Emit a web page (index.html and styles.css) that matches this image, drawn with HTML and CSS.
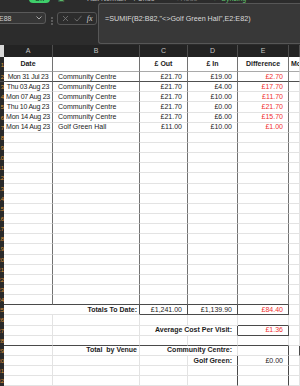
FILE: index.html
```html
<!DOCTYPE html>
<html lang="en">
<head>
    <meta charset="UTF-8">
    <title>Hall costs</title>
    <link rel="stylesheet" href="styles.css">
</head>
<body>
<div class="ribbon">
    <span class="toggle">On</span>
    <span class="rib-save">&#9635;</span>
    <span class="rib-text">Hall Norman</span>
    <span class="rib-text rib-undo">/ Undo</span>
    <span class="rib-text rib-redo">&lt; Redo</span>
    <span class="rib-sync">&#10003; Syncing</span>
</div>

<div class="formula-bar">
    <div class="name-box">
        <span>E88</span>
        <svg width="6" height="4" viewBox="0 0 6 4"><path d="M0.5 0.5 L3 3 L5.5 0.5" fill="none" stroke="#b8b8b8" stroke-width="0.9"/></svg>
    </div>
    <svg class="grip" width="2" height="8" viewBox="0 0 2 8"><circle cx="1" cy="1" r="0.8" fill="#9a9a9a"/><circle cx="1" cy="4" r="0.8" fill="#9a9a9a"/><circle cx="1" cy="7" r="0.8" fill="#9a9a9a"/></svg>
    <div class="fx-box">
        <svg width="7" height="7" viewBox="0 0 7 7"><path d="M1 1 L6 6 M6 1 L1 6" stroke="#7a7a7a" stroke-width="0.8"/></svg>
        <svg width="8" height="7" viewBox="0 0 8 7"><path d="M0.5 3.8 L3 6 L7.5 0.8" fill="none" stroke="#7a7a7a" stroke-width="0.8"/></svg>
        <span class="fx">fx</span>
    </div>
    <div class="formula">=SUMIF(B2:B82,"&lt;&gt;Golf Green Hall",E2:E82)</div>
</div>

<table class="sheet">
    <colgroup>
        <col class="w-rh"><col class="w-a"><col class="w-b"><col class="w-c"><col class="w-d"><col class="w-e"><col class="w-f">
    </colgroup>
    <thead>
    <tr class="col-head">
        <th class="corner"></th><th>A</th><th>B</th><th>C</th><th>D</th><th>E</th><th></th>
    </tr>
    </thead>
    <tbody>
    <tr class="grid title-row">
        <th class="rh">1</th><td class="mid">Date</td><td></td><td class="mid">£ Out</td><td class="mid">£ In</td><td class="mid">Difference</td><td class="bold">Mo</td>
    </tr>
    <tr class="grid frozen">
        <th class="rh">2</th><td class="date">Mon 31 Jul 23</td><td>Community Centre</td><td class="num">£21.70</td><td class="num">£19.00</td><td class="num red">£2.70</td><td></td>
    </tr>
    <tr class="grid">
        <th class="rh">3</th><td class="date">Thu 03 Aug 23</td><td>Community Centre</td><td class="num">£21.70</td><td class="num">£4.00</td><td class="num red">£17.70</td><td></td>
    </tr>
    <tr class="grid">
        <th class="rh">4</th><td class="date">Mon 07 Aug 23</td><td>Community Centre</td><td class="num">£21.70</td><td class="num">£10.00</td><td class="num red">£11.70</td><td></td>
    </tr>
    <tr class="grid">
        <th class="rh">5</th><td class="date">Thu 10 Aug 23</td><td>Community Centre</td><td class="num">£21.70</td><td class="num">£0.00</td><td class="num red">£21.70</td><td></td>
    </tr>
    <tr class="grid">
        <th class="rh">6</th><td class="date">Mon 14 Aug 23</td><td>Community Centre</td><td class="num">£21.70</td><td class="num">£6.00</td><td class="num red">£15.70</td><td></td>
    </tr>
    <tr class="grid">
        <th class="rh">7</th><td class="date">Mon 14 Aug 23</td><td>Golf Green Hall</td><td class="num">£11.00</td><td class="num">£10.00</td><td class="num red">£1.00</td><td></td>
    </tr>
    <tr class="grid"><th class="rh">8</th><td></td><td></td><td></td><td></td><td></td><td></td></tr>
    <tr class="grid"><th class="rh">9</th><td></td><td></td><td></td><td></td><td></td><td></td></tr>
    <tr class="grid"><th class="rh">10</th><td></td><td></td><td></td><td></td><td></td><td></td></tr>
    <tr class="grid"><th class="rh">11</th><td></td><td></td><td></td><td></td><td></td><td></td></tr>
    <tr class="grid"><th class="rh">12</th><td></td><td></td><td></td><td></td><td></td><td></td></tr>
    <tr class="grid"><th class="rh">13</th><td></td><td></td><td></td><td></td><td></td><td></td></tr>
    <tr class="grid"><th class="rh">14</th><td></td><td></td><td></td><td></td><td></td><td></td></tr>
    <tr class="grid"><th class="rh">15</th><td></td><td></td><td></td><td></td><td></td><td></td></tr>
    <tr class="grid"><th class="rh">16</th><td></td><td></td><td></td><td></td><td></td><td></td></tr>
    <tr class="grid"><th class="rh">17</th><td></td><td></td><td></td><td></td><td></td><td></td></tr>
    <tr class="grid"><th class="rh">18</th><td></td><td></td><td></td><td></td><td></td><td></td></tr>
    <tr class="grid"><th class="rh">19</th><td></td><td></td><td></td><td></td><td></td><td></td></tr>
    <tr class="grid"><th class="rh">20</th><td></td><td></td><td></td><td></td><td></td><td></td></tr>
    <tr class="grid"><th class="rh">21</th><td></td><td></td><td></td><td></td><td></td><td></td></tr>
    <tr class="grid"><th class="rh">22</th><td></td><td></td><td></td><td></td><td></td><td></td></tr>
    <tr class="grid"><th class="rh">23</th><td></td><td></td><td></td><td></td><td></td><td></td></tr>
    <tr class="grid rule-below"><th class="rh">24</th><td></td><td></td><td></td><td></td><td></td><td></td></tr>
    <tr class="totals">
        <th class="rh">25</th><td colspan="2" class="num bold label box-l">Totals To Date:</td><td class="num box">£1,241.00</td><td class="num box">£1,139.90</td><td class="num red box">£84.40</td><td></td>
    </tr>
    <tr class="above-avg">
        <th class="rh">26</th><td></td><td></td><td></td><td></td><td class="top-e"></td><td></td>
    </tr>
    <tr class="avg">
        <th class="rh">27</th><td></td><td></td><td colspan="2" class="num bold box-l">Average Cost Per Visit:</td><td class="num red box">£1.36</td><td></td>
    </tr>
    <tr class="rule-below">
        <th class="rh">28</th><td></td><td></td><td></td><td></td><td></td><td></td>
    </tr>
    <tr class="venue">
        <th class="rh">29</th><td></td><td class="num bold label">Total&nbsp; by Venue</td><td colspan="2" class="num bold">Community Centre:</td><td class="num"></td><td></td>
    </tr>
    <tr class="venue">
        <th class="rh">30</th><td></td><td></td><td></td><td class="num bold">Golf Green:</td><td class="num">£0.00</td><td></td>
    </tr>
    <tr class="venue">
        <th class="rh">31</th><td></td><td></td><td></td><td></td><td></td><td></td>
    </tr>
    <tr class="venue">
        <th class="rh">32</th><td></td><td></td><td></td><td></td><td></td><td></td>
    </tr>
    </tbody>
</table>
</body>
</html>
```

FILE: styles.css
```css
html, body {
    margin: 0;
    padding: 0;
}
body {
    width: 300px;
    height: 386px;
    overflow: hidden;
    background: #2c2c2c;
    font-family: "Liberation Sans", Arial, sans-serif;
}

/* ribbon, mostly scrolled off the top */
.ribbon {
    height: 3px;
    overflow: hidden;
    display: flex;
    align-items: flex-end;
    font-size: 7px;
    line-height: 8px;
    color: #bdbdbd;
}
.ribbon span {
    height: 8px;
    white-space: nowrap;
}
.toggle {
    margin-left: 29px;
    width: 21px;
    border-radius: 4px;
    background: #3fcf6b;
    color: #111;
    text-align: center;
}
.rib-save {
    margin-left: 8px;
    color: #59b96d;
}
.rib-text {
    margin-left: 22px;
}
.rib-undo {
    margin-left: 8px;
}
.rib-redo {
    margin-left: 20px;
    color: #777;
}
.rib-sync {
    margin-left: 16px;
    color: #5fc46d;
}

/* formula bar */
.formula-bar {
    height: 42px;
    display: flex;
    align-items: flex-start;
}
.name-box {
    box-sizing: border-box;
    margin: 9px 0 0 -4px;
    width: 50px;
    height: 12px;
    border: 1px solid #5a5a5a;
    border-radius: 3px;
    background: #363636;
    display: flex;
    align-items: center;
    justify-content: space-between;
    padding: 0 3px 0 2px;
    color: #cfcfcf;
    font-size: 7px;
}
.grip {
    margin: 14px 0 0 5px;
}
.fx-box {
    box-sizing: border-box;
    margin: 9px 0 0 4px;
    width: 40px;
    height: 13px;
    border: 1px solid #555;
    border-radius: 3px;
    display: flex;
    align-items: center;
    justify-content: space-around;
    padding: 0 1px;
}
.fx {
    font-family: "Liberation Serif", serif;
    font-style: italic;
    font-size: 8px;
    color: #d0d0d0;
}
.formula {
    box-sizing: border-box;
    flex: 1;
    height: 41px;
    margin-left: 1px;
    border: 1px solid #575757;
    border-right: none;
    border-radius: 3px 0 0 3px;
    background: #383838;
    color: #dadada;
    font-size: 7.2px;
    line-height: 9px;
    padding: 10px 6px;
    white-space: nowrap;
}

/* sheet */
.sheet {
    table-layout: fixed;
    width: 300px;
    border-collapse: separate;
    border-spacing: 0;
    font-size: 7px;
    color: #1c1c1c;
}
.w-rh { width: 4px; }
.w-a { width: 49px; }
.w-b { width: 87px; }
.w-c { width: 48px; }
.w-d { width: 50px; }
.w-e { width: 51px; }
.w-f { width: 11px; }

.sheet td {
    box-sizing: border-box;
    padding: 0 5px;
    background: #fff;
    border-right: 1px solid #e3e3e3;
    border-bottom: 1px solid #e3e3e3;
    white-space: nowrap;
    overflow: hidden;
    line-height: 8px;
}
.sheet tbody tr {
    height: 10.15px;
}
.col-head {
    height: 12px;
}
.col-head th {
    background: #232323;
    color: #c4c4c4;
    font-weight: normal;
    font-size: 7px;
    line-height: 8px;
    padding: 0;
    border-right: 1px solid #4d4d4d;
}
.col-head .corner {
    background: #d8d8d8;
    border-right: none;
}
.rh {
    padding: 0;
    background: #2a2a2a;
    color: #d9953a;
    font-weight: normal;
    font-size: 6px;
    line-height: 8px;
    text-align: right;
    overflow: hidden;
    white-space: nowrap;
    direction: rtl;
}

.mid { text-align: center; }
.num { text-align: right; }
.bold { font-weight: bold; }
.red { color: #f0302f; }
.sheet .date {
    padding: 0;
    text-align: center;
    letter-spacing: -0.25px;
}
.sheet .label {
    padding-right: 2px;
}

.sheet .title-row {
    height: 15px;
}
.title-row td {
    font-weight: bold;
    border-bottom-color: #a9a9a9;
}
.title-row td:last-child {
    padding: 0 0 0 2px;
}

/* heavy column rules through the data block */
.grid td:nth-child(2),
.grid td:nth-child(3),
.grid td:nth-child(4),
.grid td:nth-child(5),
.grid td:nth-child(6) {
    border-right-color: #727272;
}
.frozen td,
.frozen th {
    border-bottom: 1px solid #505050;
}
.rule-below td:not(:last-child) {
    border-bottom-color: #4a4a4a;
}

.totals .box-l,
.avg .box-l {
    border-right-color: #4a4a4a;
}
.sheet .box {
    border-right-color: #4a4a4a;
    border-bottom-color: #4a4a4a;
}
.above-avg .top-e {
    border-bottom-color: #4a4a4a;
}
.venue td:nth-child(5),
.venue td:nth-child(6) {
    border-right-color: #4a4a4a;
}
```
